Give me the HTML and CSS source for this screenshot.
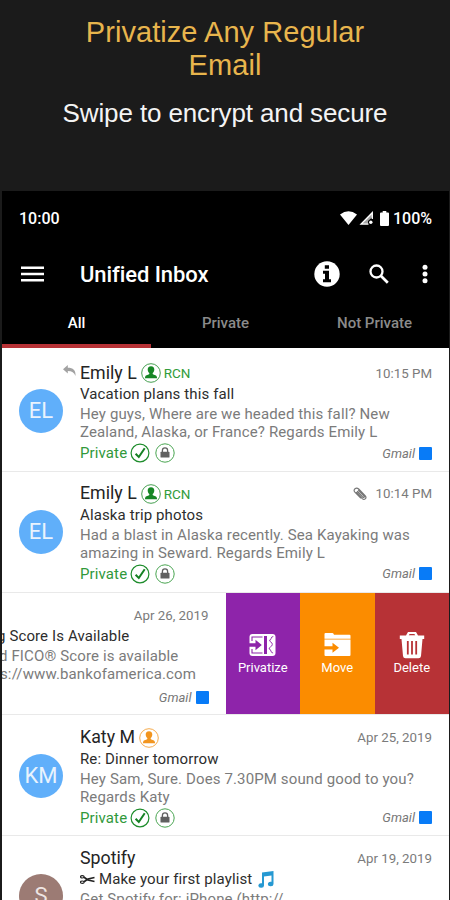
FILE: index.html
```html
<!DOCTYPE html>
<html lang="en">
<head>
<meta charset="utf-8">
<title>Unified Inbox</title>
<link rel="stylesheet" href="styles.css">
</head>
<body>
<svg class="defs" width="0" height="0">
  <symbol id="person" viewBox="0 0 20 20"><circle cx="10" cy="10" r="9.300" fill="#fff" stroke="currentColor" stroke-width=".8"/><path fill="currentColor" d="M10 3.200c2.300 0 3.500 1.500 3.300 3.600-.1 1.500-.8 2.700-1.600 3.300v1c.4.700 3.600.8 4.100 2.600l.3 1.500H3.900l.3-1.500c.5-1.800 3.700-1.900 4.100-2.600v-1C7.500 9.500 6.800 8.300 6.700 6.800 6.500 4.700 7.700 3.200 10 3.200z"/></symbol>
  <symbol id="check" viewBox="0 0 20 20"><circle cx="10" cy="10" r="8.900" fill="none" stroke="#1d8c2b" stroke-width="1.200"/><path d="M5.600 10.800l3.200 3.200L14.700 5.200" fill="none" stroke="#158023" stroke-width="2"/></symbol>
  <symbol id="lock" viewBox="0 0 20 20"><circle cx="10" cy="10" r="9.200" fill="none" stroke="#4aa552" stroke-width="1"/><rect x="5.500" y="8.800" width="9" height="5.700" rx=".6" fill="#606060"/><path d="M7.400 9V7.500a2.600 2.600 0 0 1 5.200 0V9" fill="none" stroke="#606060" stroke-width="1.300"/></symbol>
</svg>
<header class="promo">
  <h1>Privatize Any Regular<br>Email</h1>
  <p>Swipe to encrypt and secure</p>
</header>
<main class="phone">
  <div class="status">
    <span class="clock">10:00</span>
    <svg class="wifi" viewBox="0 0 17 14"><path fill="#fff" d="M0 3.600Q8.500-3.200 17 3.600L8.500 14z"/></svg>
    <svg class="signal" viewBox="0 0 15 14"><path fill="none" stroke="#fff" stroke-width="1.300" d="M13.300 8V1.700L2 13.200h7.500"/><path fill="#fff" d="M6.500 8.500L13.500 2v4L9 10v3H3z" opacity=".65"/><circle cx="11.800" cy="11.300" r="1.700" fill="#fff"/></svg>
    <svg class="battery" viewBox="0 0 9 15"><path fill="#fff" d="M2.700 0h3.600v1.500H8q1 0 1 1V14q0 1-1 1H1q-1 0-1-1V2.500q0-1 1-1h1.700z"/></svg>
    <span class="percent">100%</span>
  </div>
  <div class="bar">
    <svg class="menu" viewBox="0 0 23 16"><path fill="#fff" d="M0 .5h23v2.600H0zM0 6.700h23v2.600H0zM0 12.900h23v2.600H0z"/></svg>
    <span class="title">Unified Inbox</span>
    <svg class="info" viewBox="0 0 26 26"><circle cx="13" cy="13" r="12.700" fill="#fff"/><path fill="#000" d="M10.800 4.300h4.200v3.500h-4.200zM9 9.700h6v8.500h2v3H9v-3h2v-5.500H9z"/></svg>
    <svg class="search" viewBox="0 0 20 20"><circle cx="7.500" cy="7.500" r="6" fill="none" stroke="#fff" stroke-width="2.300"/><path d="M11.800 11.800l7 7" stroke="#fff" stroke-width="2.700"/></svg>
    <svg class="more" viewBox="0 0 6 20"><g fill="#fff"><circle cx="3" cy="3.200" r="2.500"/><circle cx="3" cy="10" r="2.500"/><circle cx="3" cy="16.700" r="2.500"/></g></svg>
  </div>
  <nav class="tabs"><span class="tab active">All</span><span class="tab">Private</span><span class="tab">Not Private</span></nav>
  <div class="list">
    <article class="row">
      <div class="avatar">EL</div>
      <div class="content">
        <div class="head"><svg class="reply" viewBox="0 0 13 11"><path fill="#a2a2a2" d="M0 4.200L4.800 0v2.700C10 2.700 13 5 12.500 11 11.200 7.600 9 6 4.800 6v2.500z"/></svg><span class="name">Emily L</span><svg class="badge green"><use href="#person"/></svg><span class="rcn">RCN</span><span class="date">10:15 PM</span></div>
        <div class="subject">Vacation plans this fall</div>
        <div class="body">Hey guys, Where are we headed this fall? New<br>Zealand, Alaska, or France? Regards Emily L</div>
        <div class="foot"><span class="private">Private</span><svg class="check"><use href="#check"/></svg><svg class="lock"><use href="#lock"/></svg><span class="account">Gmail</span><i class="swatch"></i></div>
      </div>
    </article>
    <article class="row raised">
      <div class="avatar">EL</div>
      <div class="content">
        <div class="head"><span class="name">Emily L</span><svg class="badge green"><use href="#person"/></svg><span class="rcn">RCN</span><svg class="clip" viewBox="0 0 14 14"><path fill="none" stroke="#777" stroke-width="1.200" stroke-linecap="round" d="M3.500 5.500l5.800 6.100c2 2 4.800-.4 3-2.600L5.700 2C3.200-.4-.5 2.500 1.900 5.200l5.600 5.600M4.500 4.500l5.300 5.600c.9.900 2-.1 1.200-1.100L5.600 3.300"/></svg><span class="date">10:14 PM</span></div>
        <div class="subject">Alaska trip photos</div>
        <div class="body">Had a blast in Alaska recently. Sea Kayaking was<br>amazing in Seward. Regards Emily L</div>
        <div class="foot"><span class="private">Private</span><svg class="check"><use href="#check"/></svg><svg class="lock"><use href="#lock"/></svg><span class="account">Gmail</span><i class="swatch"></i></div>
      </div>
    </article>
    <article class="row swiped">
      <div class="content">
        <div class="head"><span class="date">Apr 26, 2019</span></div>
        <div class="subject">g Score Is Available</div>
        <div class="body">d FICO® Score is available<br><span class="url">s://www.bankofamerica.com</span></div>
        <div class="foot"><span class="account">Gmail</span><i class="swatch"></i></div>
      </div>
      <div class="actions">
        <div class="action privatize">
          <svg width="27" height="24" viewBox="0 0 27 24"><rect x=".5" y="1" width="26" height="22" rx="3" fill="#fff"/><path fill="none" stroke="#8e24aa" stroke-width="1.100" d="M3 8V4h10.500M3 16v4h10.500"/><path fill="#8e24aa" d="M15 3h3v18h-3zM0 10.300h6.500V6.800l6.300 5.200-6.300 5.200v-3.500H0z"/><path d="M24.300 3.500c-3 0-1.400 3.500-3.700 3.500 0 2.700 3 1.800 2.700 4.500s-3.200 2-3.200 4.500c2.500 0 1 4 4 4" fill="none" stroke="#8e24aa" stroke-width=".9"/></svg>
          <span>Privatize</span>
        </div>
        <div class="action move">
          <svg width="27" height="24" viewBox="0 0 27 24"><path fill="#fff" d="M.5 1q0-1 1-1h7q1 0 1.500 1.800h15.500q1 0 1 1v3H.5zM.5 6.500h26V22q0 1-1 1h-24q-1 0-1-1z"/><path fill="#fb8c00" d="M0 13.200h8.500v-3.400l6.500 5-6.500 5v-3.400H0z"/></svg>
          <span>Move</span>
        </div>
        <div class="action delete">
          <svg width="26" height="28" viewBox="0 0 26 28"><path fill="#fff" fill-rule="evenodd" d="M.8 4.500h6.200L9 1h8l2 3.500h6.200V8h-1.700L22 25q-.3 2.200-2.500 2.200h-13Q4.300 27.200 4 25L2.500 8H.8zm9-.2h6.400l-.8-1.300h-4.800z"/><path d="M8.800 10v13.500M13 10v13.500M17.200 10v13.500" stroke="#b73236" stroke-width="1.800"/></svg>
          <span>Delete</span>
        </div>
      </div>
    </article>
    <article class="row">
      <div class="avatar">KM</div>
      <div class="content">
        <div class="head"><span class="name">Katy M</span><svg class="badge orange"><use href="#person"/></svg><span class="date">Apr 25, 2019</span></div>
        <div class="subject">Re: Dinner tomorrow</div>
        <div class="body">Hey Sam, Sure. Does 7.30PM sound good to you?<br>Regards Katy</div>
        <div class="foot"><span class="private">Private</span><svg class="check"><use href="#check"/></svg><svg class="lock"><use href="#lock"/></svg><span class="account">Gmail</span><i class="swatch"></i></div>
      </div>
    </article>
    <article class="row raised">
      <div class="avatar brown">S</div>
      <div class="content">
        <div class="head"><span class="name">Spotify</span><span class="date">Apr 19, 2019</span></div>
        <div class="subject"><svg class="scissors" viewBox="0 0 15 9"><g fill="none" stroke="#222" stroke-width="1.200"><ellipse cx="2.300" cy="1.800" rx="1.800" ry="1.200"/><ellipse cx="2.300" cy="7.200" rx="1.800" ry="1.200"/><path stroke-width="1.700" d="M4 2.300L8 5l6.500 1.500M4 6.700L8 4l6.500-1.500"/></g></svg><span>Make your first playlist</span><svg class="music" viewBox="0 0 16 17"><path fill="#2699d2" fill-rule="evenodd" d="M4 1.500L15.500 0v13a2.800 2.300 0 1 1-2-2.200V4.500L6 5.500v9a2.800 2.300 0 1 1-2-2.200z"/></svg></div>
        <div class="body">Get Spotify for: iPhone (http://</div>
      </div>
    </article>
  </div>
</main>
</body>
</html>
```
FILE: styles.css
```css
* { box-sizing: border-box; }
body { margin: 0; width: 450px; height: 900px; overflow: hidden; background: #1b1b1b; font-family: Roboto, "Liberation Sans", sans-serif; }
svg { display: block; flex: none; }
.defs { position: absolute; }
.promo { height: 191px; padding-top: 16px; text-align: center; font-family: "Liberation Sans", Arial, sans-serif; }
h1 { margin: 0; font-size: 29px; line-height: 33px; font-weight: 400; color: #e8b54d; letter-spacing: .05px; }
p { margin: 14px 0 0; font-size: 26px; line-height: 34px; color: #f4f4f4; letter-spacing: -.12px; }
.phone { width: 447px; height: 709px; margin-left: 2px; background: #000; overflow: hidden; }
.status { height: 52px; display: flex; align-items: center; padding: 2px 17px 0 17px; color: #fff; font-size: 16px; font-weight: 500; }
.clock { margin-right: auto; }
.wifi { width: 17px; height: 14px; }
.signal { width: 15px; height: 14px; margin-left: 2px; }
.battery { width: 9px; height: 15px; margin: 0 4px 0 6px; }
.bar { height: 62px; display: flex; align-items: center; padding: 0 21px 0 19px; color: #fff; }
.menu { width: 23px; height: 16px; }
.title { margin: 2px auto 0 36px; font-size: 22px; font-weight: 500; line-height: 30px; letter-spacing: -.08px; }
.info { width: 26px; height: 26px; }
.search { width: 20px; height: 20px; margin: 0 33px 0 29px; }
.more { width: 6px; height: 20px; }
.tabs { height: 43px; display: grid; grid-template-columns: repeat(3, 1fr); text-align: center; color: #8b8b8b; font-size: 15px; font-weight: 500; line-height: 36px; }
.tab.active { color: #fff; border-bottom: 4px solid #b73236; }
.list { background: #fff; height: 552px; padding-top: 2px; }
.row { height: 121.500px; display: flex; border-bottom: 1px solid #e9e9e9; padding: 12px 17px 0 17px; }
.raised { padding-top: 11px; }
.avatar { width: 44px; height: 44px; border-radius: 50%; background: #60affa; color: #e9f3fd; font-size: 22px; line-height: 44px; text-align: center; margin: 27px 17px 0 0; flex: none; }
.avatar.brown { background: #9c7b74; color: #eee5e3; }
.content { flex: 1; min-width: 0; white-space: nowrap; }
.head { height: 22px; display: flex; align-items: center; }
.name { font-size: 17.800px; line-height: 22px; color: #242424; margin-top: -1px; }
.reply { width: 13px; height: 11px; margin: -5px 4px 0 -17px; }
.badge { width: 20px; height: 20px; margin-left: 4px; }
.green { color: #168625; }
.orange { color: #f2951f; }
.rcn { font-size: 13.500px; color: #319c3b; margin-left: 3px; }
.clip { width: 14px; height: 14px; margin: 0 9px 0 auto; }
.date { margin-left: auto; font-size: 13.300px; color: #7b7b7b; }
.clip + .date { margin-left: 0; }
.subject { height: 20px; line-height: 20px; font-size: 15px; letter-spacing: .12px; color: #2d2d2d; display: flex; align-items: center; }
.body { margin-top: 1px; height: 36px; font-size: 15px; letter-spacing: .13px; line-height: 18px; color: #7b7b7b; }
.foot { margin-top: 2px; height: 20px; display: flex; align-items: center; }
.private { font-size: 15px; letter-spacing: .12px; color: #31993b; }
.check { width: 20px; height: 20px; margin-left: 3px; }
.lock { width: 20px; height: 20px; margin-left: 5px; }
.account { margin-left: auto; font-size: 13px; font-style: italic; color: #777; }
.swatch { width: 13px; height: 13px; background: #087bf7; margin-left: 4px; border-radius: 1px; }
.swiped { padding: 0; }
.swiped .content { padding: 11px 17px 0 0; overflow: hidden; }
.swiped .subject { margin-left: -5px; }
.swiped .body { margin-left: -3px; }
.url { margin-left: 1px; }
.swiped .foot { margin-top: 4px; }
.actions { display: flex; }
.action { width: 74.500px; padding-top: 38px; display: flex; flex-direction: column; align-items: center; color: #fff; font-size: 13px; }
.action svg { height: 28px; }
.action span { line-height: 18px; }
.privatize { background: #8e24aa; }
.move { background: #fb8c00; }
.delete { background: #b73236; }
.scissors { width: 15px; height: 9px; margin-right: 4px; }
.music { width: 16px; height: 17px; margin-left: 6px; }
```
